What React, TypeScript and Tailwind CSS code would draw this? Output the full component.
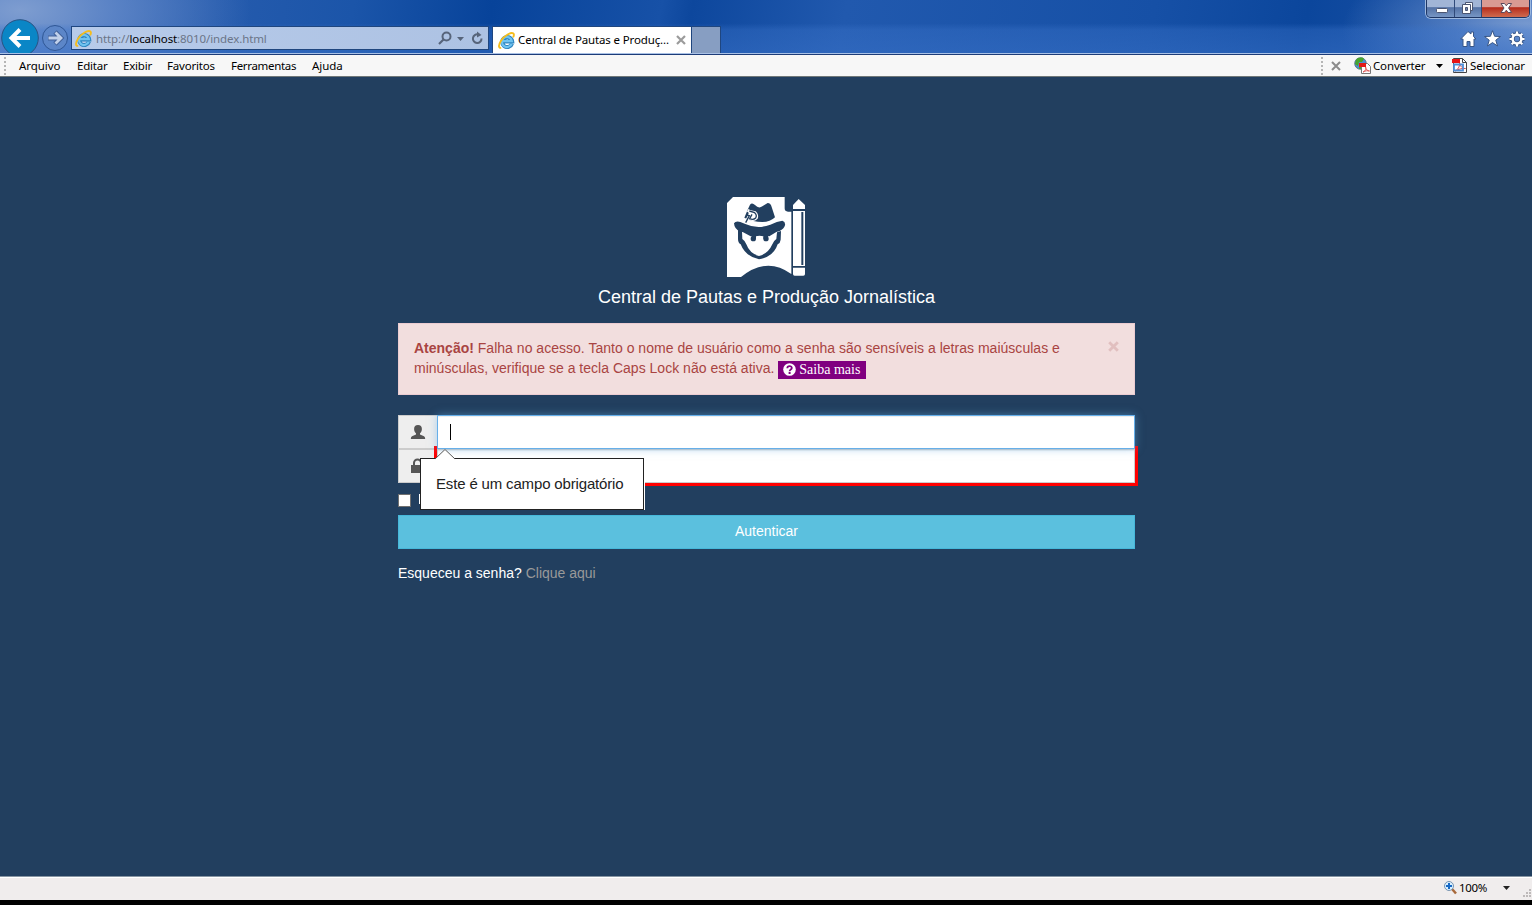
import React from "react";

const UI = "font-['Noto_Sans','Open_Sans',sans-serif]";

function IeIcon() {
  return (
    <svg width="17" height="17" viewBox="0 0 17 17" className="shrink-0">
      <path d="M14 11.600A5 5 0 1 1 14.200 9.400H5" fill="none" stroke="#2f86c0" strokeWidth="4" />
      <path d="M13.700 11.600A5 5 0 1 1 13.900 9.200H5" fill="none" stroke="#6fc3f0" strokeWidth="2.200" />
      <path d="M3.200 15.800C.2 16.400.3 12.900 3 8.700 6.500 3.300 13 .1 15.200 1.300c1 .6.8 2.200-.1 4" fill="none" stroke="#f5bd1c" strokeWidth="1.900" />
    </svg>
  );
}

function WindowButtons() {
  return (
    <div className="mr-[2px] flex h-[18px] w-[104px] overflow-hidden rounded-b-[5px] border border-t-0 border-[#1e3664] shadow-[0_0_0_1px_#9db8df]">
      <div className="flex w-[28px] justify-center border-r border-[#304a79] bg-linear-to-b from-[#a1b5d6] from-40% via-[#5472a5] via-45% to-[#7796c4]">
        <svg width="28" height="17" className="shrink-0"><rect x="9.500" y="8.500" width="11" height="4" rx="1" fill="#fff" stroke="#4b5571" /></svg>
      </div>
      <div className="flex w-[27px] justify-center border-r border-[#304a79] bg-linear-to-b from-[#a1b5d6] from-40% via-[#5472a5] via-45% to-[#7796c4]">
        <svg width="27" height="17" fill="#fff" stroke="#4b5571" className="shrink-0">
          <path d="M10.500 2.500h7v8h-7z" />
          <path d="M7.500 4.500h8v9h-8z" />
          <path d="M10.500 7.500h2v3h-2z" fill="#7288b1" />
        </svg>
      </div>
      <div className="flex flex-1 justify-center bg-linear-to-b from-[#d99a92] from-40% via-[#b5291a] via-45% to-[#cf6a4e]">
        <svg width="46" height="17" className="shrink-0">
          <path d="M18 3.500h3.500l1.800 2.300 1.800-2.300h3.500l-3 4.500 3 4.500h-3.500l-1.800-2.300-1.800 2.300h-3.500l3-4.500z" fill="#fff" stroke="#5b4a5c" />
        </svg>
      </div>
    </div>
  );
}

function NavButtons() {
  return (
    <svg width="71" height="34" viewBox="0 0 71 34" className="shrink-0 overflow-visible">
      <circle cx="20" cy="18" r="18.300" fill="#0a86c6" stroke="#2a5384" />
      <path d="M30 18H12M20 9.500 11.500 18l8.500 8.500" fill="none" stroke="#fff" strokeWidth="4" />
      <circle cx="55" cy="18" r="12.500" fill="#5c86c8" stroke="#2f5796" />
      <path d="M48 18h12M55 12 61 18l-6 6" fill="none" stroke="#40609a" strokeWidth="4.800" />
      <path d="M48.500 18h11.500M55.500 12.500 61 18l-5.500 5.500" fill="none" stroke="#c0d0ea" strokeWidth="2.800" />
    </svg>
  );
}

function AddressBar() {
  return (
    <div className="mt-[6px] flex h-[24px] w-[418px] shrink-0 items-center border border-[#1f467f] bg-linear-to-r from-[#b7cbea] to-[#adc2e3] pl-[3px]">
      <IeIcon />
      <span className={`ml-[4px] mt-[2px] whitespace-nowrap text-[11.500px] leading-[16px] text-[#6b7587] tracking-[-0.100px] ${UI}`}>
        http://<span className="text-black">localhost</span>:8010/index.html
      </span>
      <svg width="52" height="22" className="ml-auto">
        <circle cx="14.500" cy="9.500" r="4" fill="none" stroke="#57647a" strokeWidth="2" />
        <path d="M11.500 12.500 7 17" stroke="#57647a" strokeWidth="2.200" />
        <path d="M25 10h7l-3.500 4z" fill="#57647a" />
        <path d="M49.500 11.500a4.300 4.300 0 1 1-3.300-4" fill="none" stroke="#57647a" strokeWidth="2" />
        <path d="M45 4.500 49.500 8 45 10.500z" fill="#57647a" />
      </svg>
      <span className="w-[4px]" />
    </div>
  );
}

function Tabs() {
  return (
    <div className="ml-[3px] mt-[6px] flex h-[27px]">
      <div className="flex w-[200px] items-center border border-b-0 border-[#1f467f] bg-white pl-[5px]">
        <IeIcon />
        <span className={`ml-[3px] w-[158px] whitespace-nowrap text-[11.500px] leading-[16px] tracking-[-0.140px] text-black ${UI}`}>
          Central de Pautas e Produç...
        </span>
        <svg width="10" height="10" className="shrink-0"><path d="m1 1 8 8M9 1 1 9" stroke="#9b9b9b" strokeWidth="2.200" /></svg>
        <span className="w-[5px] shrink-0" />
      </div>
      <div className="w-[29px] border border-b-0 border-l-0 border-[#1f467f] bg-[#879ec2]" />
    </div>
  );
}

const GEAR_TEETH = "M57 5.500v3M57 17.500v3M49.500 13h3M61.500 13h3M51.700 7.700l2.100 2.100M60.200 16.200l2.100 2.100M62.300 7.700l-2.100 2.100M53.800 16.200l-2.100 2.100";

function ToolIcons() {
  return (
    <svg width="72" height="24" className="ml-auto mt-[6px]" fill="#fff" stroke="#385686">
      <path d="M8 5.500.700 13h2.300v7.500h4v-5h3v5h4V13h2l-2.500-2.500V6h-2.500v2z" />
      <path d="m32.500 4.700 2.100 5.600 5.900.2-4.700 3.700 1.700 5.800-5-3.400-5 3.400 1.700-5.800-4.700-3.700 5.900-.2z" />
      <g fill="none">
        <path d={GEAR_TEETH} strokeWidth="4.200" />
        <circle cx="57" cy="13" r="4.500" strokeWidth="4.200" />
        <path d={GEAR_TEETH} stroke="#fff" strokeWidth="2.200" />
        <circle cx="57" cy="13" r="4.400" stroke="#fff" strokeWidth="2.500" />
      </g>
    </svg>
  );
}

function Grip() {
  return (
    <svg width="3" height="18" className="shrink-0" fill="#b5b5b5">
      {[0, 4, 8, 12, 16].map((y) => (
        <rect key={y} y={y} width="2" height="2" />
      ))}
    </svg>
  );
}

function ConvertIcon() {
  return (
    <svg width="17" height="17" className="shrink-0">
      <circle cx="6.500" cy="6.500" r="5.800" fill="#4b91cf" stroke="#486775" strokeWidth=".8" />
      <path d="M2 3c2-3 7-3 8-1L8 5 5 5 4 9 1 7zM5 9l4-1-1 4-3 0z" fill="#48a52c" />
      <path d="M7.500 6.500h6l3 3v7h-9z" fill="#fff" stroke="#777" />
      <path d="M5 6h7v4H5z" fill="#e31b17" />
      <path d="M9 15c3-1 3-4 2.500-5 .5 2.500 2 4 4 4-2-.5-4-.3-6.500 1z" fill="none" stroke="#df5b59" />
    </svg>
  );
}

function SelectIcon() {
  return (
    <svg width="16" height="17" className="shrink-0">
      <path d="M1.500 1.500h9l4 4v10h-13z" fill="#fff" stroke="#444" />
      <path d="M10.500 1.500v4h4" fill="none" stroke="#444" />
      <path d="M0 2h8v4H0z" fill="#e71414" />
      <path d="M3 14c4-2 5-6 4.500-8 .5 3 3 6 6 5.500-4-.5-6 .5-10.500 2.500z" fill="none" stroke="#d9504e" />
      <path d="M2 7.500h9v6H2z" fill="none" stroke="#4f8ed6" strokeWidth="1.800" />
    </svg>
  );
}

function MenuBar() {
  return (
    <nav className={`flex h-[23px] shrink-0 items-center border-b border-t border-b-[#6f7778] border-t-[#1d3c78] bg-[#f7f7f7] pl-[4px] text-[11.500px] leading-[16px] text-black ${UI}`}>
      <Grip />
      <span className="ml-[12px] w-[58px] tracking-[-0.050px]">Arquivo</span>
      <span className="w-[46px] tracking-[-0.200px]">Editar</span>
      <span className="w-[44px] tracking-[-0.200px]">Exibir</span>
      <span className="w-[64px] tracking-[-0.200px]">Favoritos</span>
      <span className="w-[81px] tracking-[-0.320px]">Ferramentas</span>
      <span className="tracking-[-0.050px]">Ajuda</span>
      <div className="ml-auto flex items-center">
        <Grip />
        <svg width="10" height="10" className="ml-[7px] mr-[13px]"><path d="m1 1 8 8M9 1 1 9" stroke="#8b8b8b" strokeWidth="2" /></svg>
        <ConvertIcon />
        <span className="ml-[2px] w-[63px] tracking-[-0.150px]">Converter</span>
        <svg width="7" height="4" className="mr-[9px]"><path d="M0 0h7L3.500 4z" /></svg>
        <SelectIcon />
        <span className="ml-[2px] w-[62px] tracking-[-0.100px]">Selecionar</span>
      </div>
    </nav>
  );
}

function Logo() {
  return (
    <svg width="80" height="80" viewBox="36 36 240 240" className="block">
      <path d="M54 36H209V70Q209 80 219 80H229V267Q155 213 78 276H36V54Z" fill="#fff" />
      <path d="M234 72V60L251 42 270 60V72Z" fill="#fff" />
      <path d="M234 78H270V243H234Z" fill="#fff" />
      <path d="M234 248H270V267Q270 272 265 272H239Q234 272 234 267Z" fill="#fff" />
      <path d="M262 81V240" stroke="#223f5f" strokeWidth="6" />
      <g fill="#223f5f">
        <path d="M105 59Q111 51 120 60 131 72 142 64L158 54Q167 54 170 66L180 97Q166 111 142 111 115 111 88 98L99 72Z" />
        <path d="M57 115Q62 107 76 111L91 117Q128 134 166 119 187 109 202 107 212 110 210 121 207 132 194 138L184 141 163 154H145Q133 151 123 154H107L83 141 75 140Q58 132 57 115Z" />
        <path d="M69 134L81 139 82 162Q89 166 94 178 104 206 132 213 160 206 172 178 177 166 184 162L186 142 198 138 197 164Q196 174 188 178 176 215 132 223 91 214 77 178 69 174 69 162Z" />
        <circle cx="115" cy="161" r="8" />
        <circle cx="153" cy="161" r="8" />
        <path d="M110 148H123V161H110ZM145 148H159V161H145Z" />
      </g>
      <path d="M92 114 108 82 98 76" fill="none" stroke="#fff" strokeWidth="9" />
      <path d="M100 74 122 79Q133 90 128 101 117 112 103 105Z" fill="#fff" />
      <path d="M92 113 103 92 93 90M103 78 119 83Q127 90 122 99 115 106 104 101L111 88" fill="none" stroke="#223f5f" strokeWidth="4" />
    </svg>
  );
}

function Alert() {
  return (
    <div className="mt-[16px] flex h-[72px] border border-[#ebccd1] bg-[#f2dede] p-[15px] text-[14px] leading-[20px] text-[#a94442]">
      <p className="w-[670px] -translate-y-px">
        <b>Atenção!</b> <span className="tracking-[0.020px]">Falha no acesso. Tanto o nome de usuário como a senha são sensíveis a letras maiúsculas e</span>
        <br />
        <span className="tracking-[0.015px]">minúsculas, verifique se a tecla Caps Lock não está ativa. </span>
        <a className="mt-[3px] inline-flex h-[18px] w-[88px] items-center bg-[#800080] pl-[5px] align-top font-['Liberation_Serif',serif] text-[14px] text-white">
          <svg width="13" height="13" className="-mt-px mr-[3px] shrink-0">
            <circle cx="6.500" cy="6.500" r="6.300" fill="#fff" />
            <path d="M4.300 5.200C4.300 2.500 9 2.500 8.800 5c0 1.500-2.200 1.400-2.200 3.200" fill="none" stroke="#800080" strokeWidth="1.800" />
            <path d="M5.600 9h2v2h-2z" fill="#800080" />
          </svg>
          <span className="-mt-px whitespace-nowrap">Saiba mais</span>
        </a>
      </p>
      <svg width="11" height="11" className="ml-auto mt-[2px]"><path d="m1.200 1.200 8.600 8.600m0-8.600-8.600 8.600" stroke="#e1bfbf" strokeWidth="2.800" /></svg>
    </div>
  );
}

function LoginForm() {
  return (
    <form className="relative mt-[20px]">
      <div className="flex h-[34px]">
        <div className="flex w-[39px] items-center justify-center border border-r-0 border-[#ccc] bg-[#eee]">
          <svg width="16" height="16" fill="#555"><path d="M8 1c2.600 0 3.900 1.600 3.900 3.900 0 1.800-.7 3.400-1.900 4.400v1.200l4 1.800q1.200.6 1.200 2.700H.8q0-2.100 1.200-2.700l4-1.800V9.300c-1.200-1-1.900-2.600-1.900-4.400C4.100 2.600 5.400 1 8 1z" /></svg>
        </div>
        <div className="relative z-10 flex-1 border border-[#66afe9] bg-white pl-[12px] pt-[8px] shadow-[inset_0_1px_1px_rgba(0,0,0,0.075),0_0_8px_rgba(102,175,233,0.5)]">
          <div className="h-[16px] w-px bg-black" />
        </div>
      </div>
      <div className="flex h-[34px]">
        <div className="flex w-[39px] items-center justify-center border border-r-0 border-[#ccc] bg-[#eee]">
          <svg width="14" height="16" fill="#555"><path d="M0 7h2V5a4 4 0 0 1 9 0v2h2v8H0zM4 7h5V5a2 2 0 0 0-5 0z" /></svg>
        </div>
        <div className="flex-1 border border-[#ccc] bg-white shadow-[0_0_0_3px_#f00,inset_0_1px_1px_rgba(0,0,0,0.075)]" />
      </div>
      <label className="mt-[8px] flex h-[24px] gap-[8px] text-[14px] leading-[20px] text-white">
        <span className="mt-[3px] h-[13px] w-[13px] border border-[#707070] bg-white" />
        <span className="mt-[3px] h-[10px] w-px bg-white" />
      </label>
      <button type="button" className="block h-[34px] w-full border border-[#46b8da] bg-[#5bc0de] pb-[2px] text-[14px] leading-[20px] text-white">
        Autenticar
      </button>
      <div className="absolute left-[22px] top-[43px] z-20 flex h-[52px] w-[224px] items-center whitespace-nowrap border border-[#222] bg-white pl-[15px] text-[15px] tracking-[-0.160px] text-[#222] shadow-[1px_0_0_#fff]">
        <svg width="22" height="11" className="absolute left-[13px] top-[-10px]"><path d="M1 10 11 0l10 10v1H1z" fill="#fff" /><path d="m1 10 10-9.500L21 10" fill="none" stroke="#444" strokeWidth=".9" /></svg>
        Este é um campo obrigatório
      </div>
    </form>
  );
}

function StatusBar() {
  return (
    <footer className={`flex h-[24px] shrink-0 items-center justify-end border-t border-[#8795a3] bg-[#f0eded] pb-px text-[11.500px] leading-[16px] text-black shadow-[inset_0_1px_0_#fff] ${UI}`}>
      <svg width="13" height="14" className="mr-[2px]">
        <path d="m8 8 4 4.500" stroke="#a8693b" strokeWidth="2.500" />
        <circle cx="5" cy="5" r="4.500" fill="#d8efff" stroke="#7894b0" />
        <path d="M5 2v6M2 5h6" stroke="#1769c5" strokeWidth="2" />
      </svg>
      <span className="w-[44px] tracking-[-0.300px]">100%</span>
      <svg width="7" height="4"><path d="M0 0h7L3.500 4z" fill="#222" /></svg>
      <svg width="10" height="10" className="ml-[12px] mt-[12px]" fill="#bdb9b9">
        <path d="M7 0h2v2H7zM4 3h2v2H4zM7 3h2v2H7zM1 6h2v2H1zM4 6h2v2H4zM7 6h2v2H7z" />
      </svg>
    </footer>
  );
}

export default function App() {
  return (
    <div className="flex h-[905px] w-[1532px] flex-col overflow-hidden bg-black font-['Liberation_Sans',Arial,sans-serif]">
      <header className="flex h-[54px] shrink-0 flex-col overflow-hidden border-b border-[#a9c1e6] bg-[radial-gradient(ellipse_230px_110px_at_20px_10px,#7e9dd0_0%,#668ccbcc_40%,#668ccb00_100%),radial-gradient(ellipse_190px_85px_at_1532px_30px,#7f9fd2_0%,#5d86c7cc_40%,#5d86c700_100%),linear-gradient(100deg,#3564b3_0%,#1b55a9_23%,#07439a_32%,#1751a7_43%,#0d479d_45%,#2159ae_55%,#1650a6_75%,#0b469c_85%,#2559ab_100%)]">
        <div className="flex h-[20px] shrink-0 justify-end">
          <WindowButtons />
        </div>
        <div className="flex h-[33px] shrink-0 bg-linear-to-b from-transparent from-10% via-[#3c74ca60] via-30% to-[#3c74ca80]">
          <NavButtons />
          <AddressBar />
          <Tabs />
          <ToolIcons />
        </div>
      </header>
      <MenuBar />
      <main className="flex h-[799px] shrink-0 flex-col bg-[#223f5f] pl-[398px] pt-[120px]">
        <div className="w-[737px]">
          <div className="flex justify-center pl-px">
            <Logo />
          </div>
          <h1 className="mt-[10px] text-center text-[18px] leading-[20px] text-white">Central de Pautas e Produção Jornalística</h1>
          <Alert />
          <LoginForm />
          <p className="mt-[14px] text-[14px] leading-[20px] text-white">
            Esqueceu a senha? <a className="text-[#999]">Clique aqui</a>
          </p>
        </div>
      </main>
      <StatusBar />
    </div>
  );
}
